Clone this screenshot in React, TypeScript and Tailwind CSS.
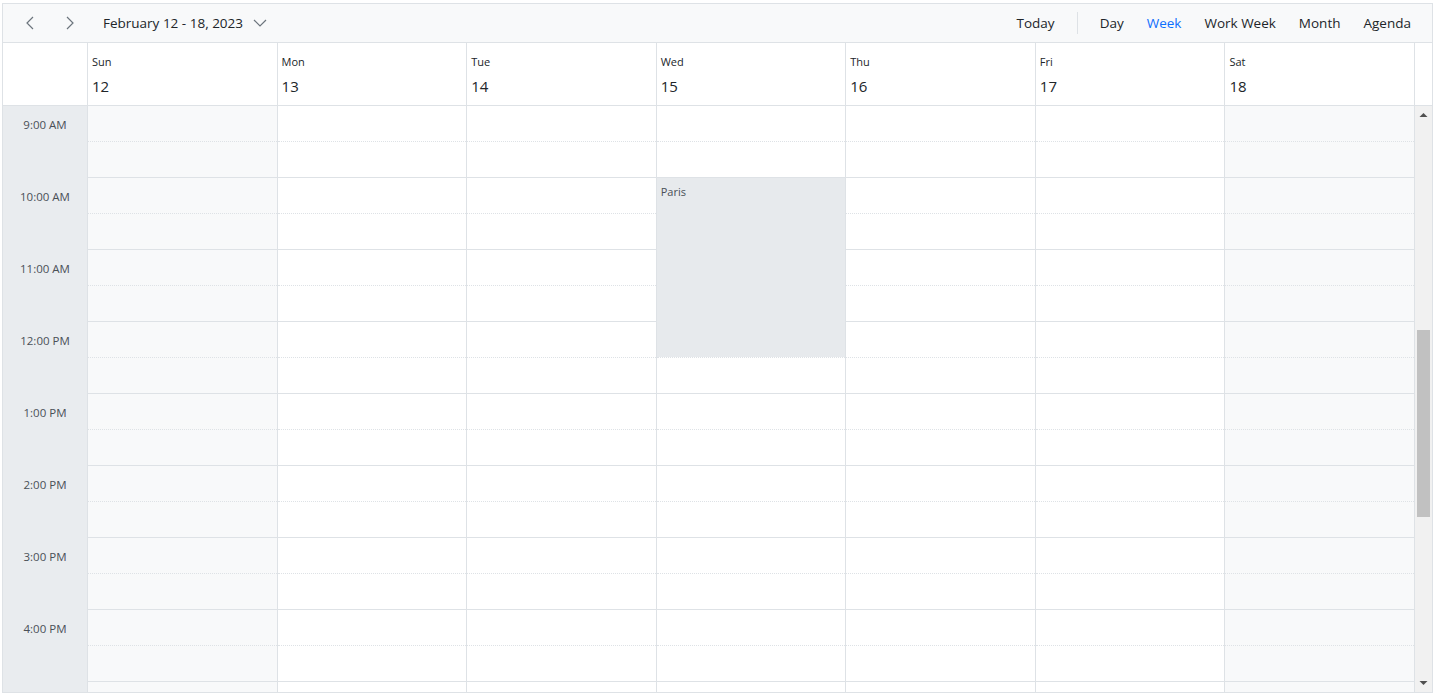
import React from 'react';

const days = [
  { name: 'Sun', date: 12, weekend: true },
  { name: 'Mon', date: 13, weekend: false },
  { name: 'Tue', date: 14, weekend: false },
  { name: 'Wed', date: 15, weekend: false },
  { name: 'Thu', date: 16, weekend: false },
  { name: 'Fri', date: 17, weekend: false },
  { name: 'Sat', date: 18, weekend: true },
];

const hours = ['9:00 AM', '10:00 AM', '11:00 AM', '12:00 PM', '1:00 PM', '2:00 PM', '3:00 PM', '4:00 PM', ''];

const Chevron: React.FC<{ dir: 'left' | 'right' | 'down' }> = ({ dir }) => {
  const pts = dir === 'left' ? '9,2 3,8 9,14' : dir === 'right' ? '4,2 10,8 4,14' : '2,5 8,11 14,5';
  return (
    <svg width="16" height="16" viewBox="0 0 16 16" fill="none" stroke="#6c757d" strokeWidth="1.2">
      <polyline points={pts} />
    </svg>
  );
};

const DayColumn: React.FC<{ weekend: boolean; event?: boolean }> = ({ weekend, event }) => (
  <div className={`relative border-r border-[#dee2e6] ${weekend ? 'bg-[#f8f9fa]' : 'bg-white'}`}>
    {hours.map((h, i) => (
      <div key={i} className="h-[72px] border-b border-[#dee2e6]">
        <div className="h-[36px] border-b border-dotted border-[#dee2e6]" />
      </div>
    ))}
    {event && (
      <div className="absolute left-0 right-0 top-[72px] h-[179px] bg-[#e7eaed] px-1 pt-[6px] text-[11px] text-[#495057]">
        Paris
      </div>
    )}
  </div>
);

export default function App() {
  return (
    <div className="h-[695px] w-[1434px] bg-white pl-[2px] pt-[3px] font-['Open_Sans',sans-serif] text-[#212529]">
      <div className="flex h-[690px] w-[1431px] flex-col overflow-hidden border border-[#dee2e6]">
        {/* toolbar */}
        <div className="flex h-[39px] shrink-0 items-center border-b border-[#dee2e6] bg-[#f8f9fa] text-[13.5px]">
          <div className="ml-[21px] flex items-center gap-[23px]">
            <Chevron dir="left" />
            <Chevron dir="right" />
          </div>
          <div className="ml-[24px] flex items-center gap-[9px]">
            <span>February 12 - 18, 2023</span>
            <Chevron dir="down" />
          </div>
          <div className="ml-auto flex items-center pr-[21px]">
            <span>Today</span>
            <div className="mx-[22px] h-[22px] w-px bg-[#dee2e6]" />
            <div className="flex items-center gap-[23px]">
              <span>Day</span>
              <span className="text-[#0d6efd]">Week</span>
              <span>Work Week</span>
              <span>Month</span>
              <span>Agenda</span>
            </div>
          </div>
        </div>

        {/* header */}
        <div className="grid h-[63px] shrink-0 grid-cols-[85px_repeat(7,1fr)_17px] border-b border-[#dee2e6]">
          <div className="border-r border-[#dee2e6]" />
          {days.map((d) => (
            <div key={d.name} className="border-r border-[#dee2e6] pl-[4px] pt-[11px]">
              <div className="text-[11px] leading-[16px]">{d.name}</div>
              <div className="mt-[6px] text-[15px] leading-[20px]">{d.date}</div>
            </div>
          ))}
          <div />
        </div>

        {/* body */}
        <div className="flex min-h-0 flex-1 overflow-hidden">
          <div className="grid flex-1 grid-cols-[85px_repeat(7,1fr)] items-start">
            <div className="border-r border-[#dee2e6] bg-[#e9ecef]">
              {hours.map((h, i) => (
                <div key={i} className="flex h-[72px] justify-center pt-[10px] text-[11.5px] text-[#495057]">
                  {h}
                </div>
              ))}
            </div>
            {days.map((d) => (
              <DayColumn key={d.name} weekend={d.weekend} event={d.name === 'Wed'} />
            ))}
          </div>
          {/* scrollbar */}
          <div className="flex w-[17px] shrink-0 flex-col items-center bg-[#f1f1f1]">
            <svg width="9" height="6" viewBox="0 0 9 6" className="mt-[6px]">
              <polygon points="0.5,5 4.5,1 8.5,5" fill="#505050" />
            </svg>
            <div className="mt-[212px] h-[187px] w-[13px] bg-[#c1c1c1]" />
            <div className="flex-1" />
            <svg width="9" height="6" viewBox="0 0 9 6" className="mb-[6px]">
              <polygon points="0.5,1 4.5,5 8.5,1" fill="#505050" />
            </svg>
          </div>
        </div>
      </div>
    </div>
  );
}
